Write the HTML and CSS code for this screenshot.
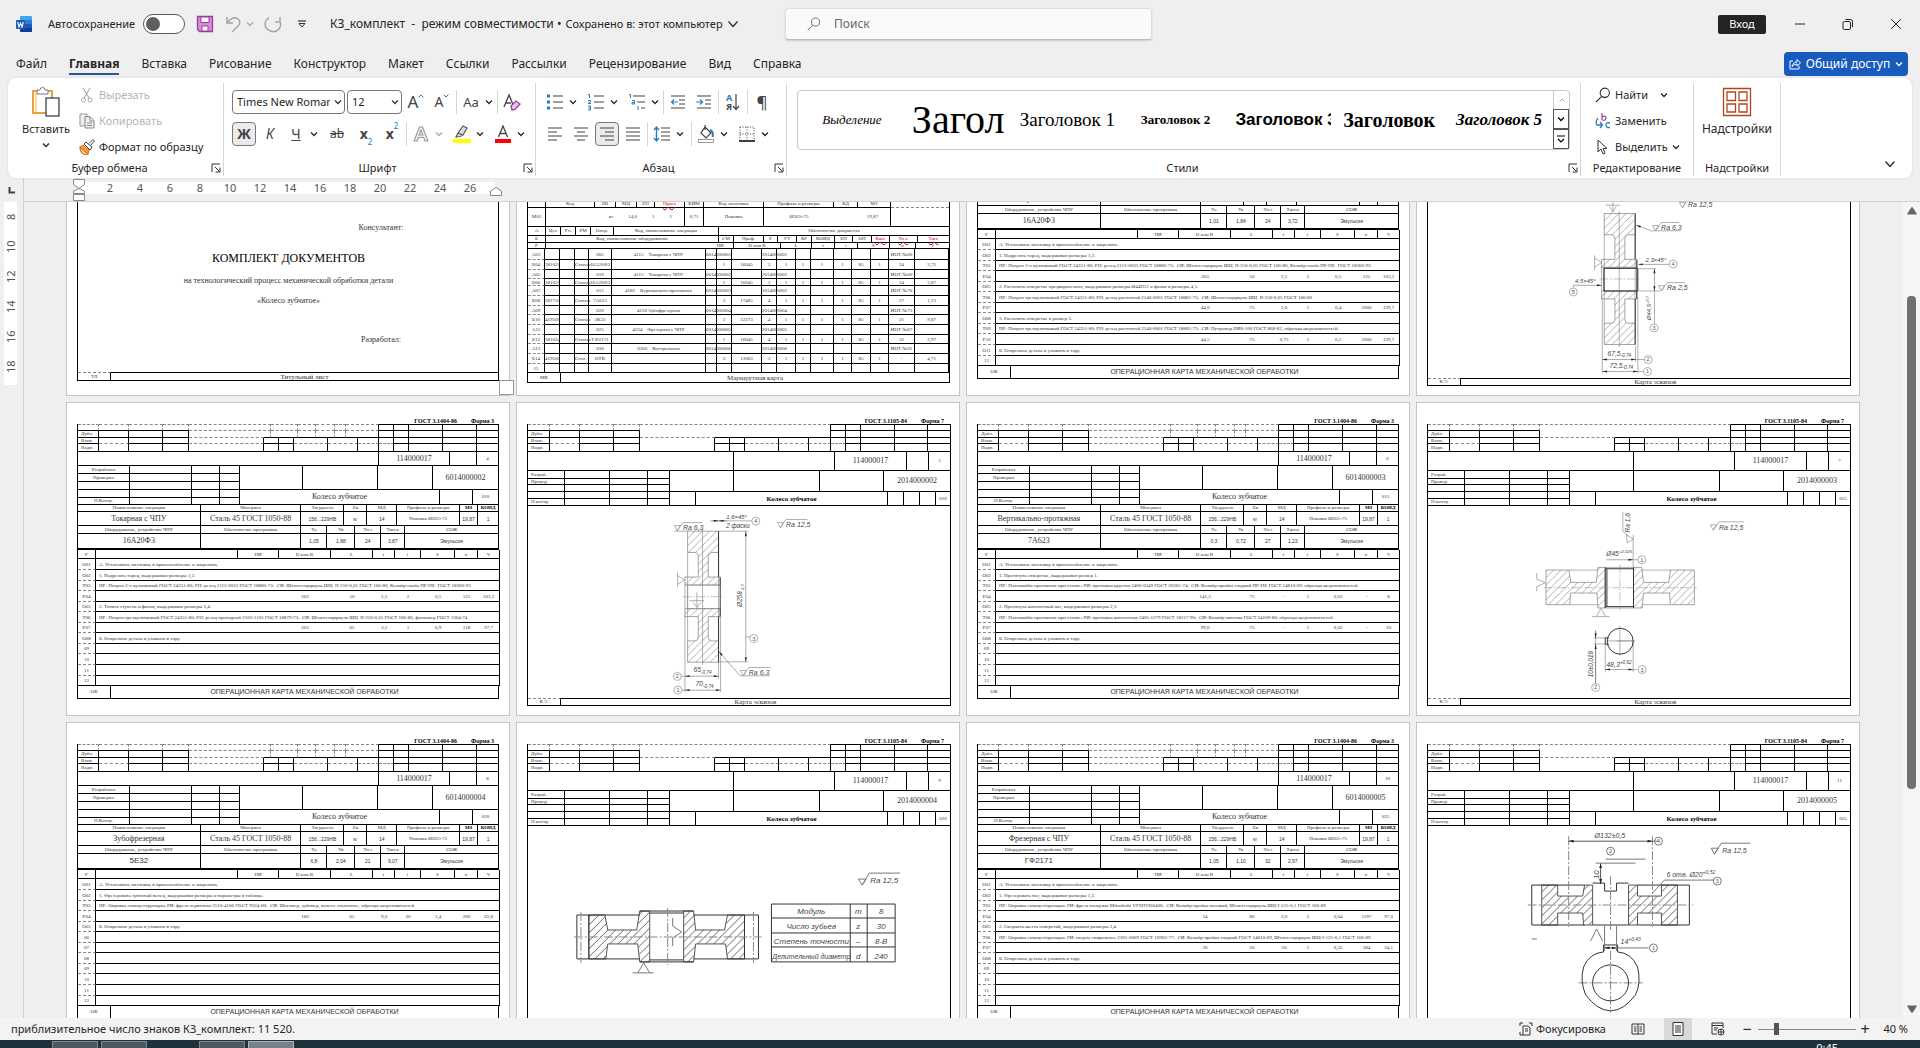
FILE: index.html
```html
<!DOCTYPE html>
<html lang="ru">
<head>
<meta charset="utf-8">
<title>КЗ_комплект</title>
<link rel="stylesheet" href="styles.css">
</head>
<body>
<svg class="defs" aria-hidden="true">
  <defs>
    <symbol id="chev" viewBox="0 0 8 8"><path d="M1 2.500 4 5.500 7 2.500" fill="none" stroke="currentColor" stroke-width="1.300"/></symbol>
    <symbol id="chev-thin" viewBox="0 0 12 12"><path d="M1.500 3.500 6 8.500l4.500-5" fill="none" stroke="currentColor" stroke-width="1.200"/></symbol>
    <symbol id="launch" viewBox="0 0 10 10"><path d="M1 9V1h8M4 4l4.500 4.500M9 4.500V9H4.500" fill="none" stroke="currentColor"/></symbol>
    <symbol id="find" viewBox="0 0 18 18"><circle cx="11" cy="6.500" r="5.200" fill="none" stroke="currentColor" stroke-width="1.200"/><path d="M7.500 10.500 1 17" stroke="currentColor" stroke-width="1.200"/></symbol>
    <pattern id="hatch" width="22" height="22" patternUnits="userSpaceOnUse"><path d="M0 22 22 0M-3 3 3-3M19 25 25 19" stroke="#888" stroke-width="2"/></pattern>
    <pattern id="hatch-fine" width="8" height="8" patternUnits="userSpaceOnUse"><path d="M0 8 8 0M-1 1 1-1M7 9 9 7" stroke="#666" stroke-width="1"/></pattern>
    <marker id="arrow" viewBox="0 0 14 8" refX="14" refY="4" markerWidth="18" markerHeight="8" markerUnits="userSpaceOnUse" orient="auto-start-reverse"><path d="M0 1 14 4 0 7z" fill="#222"/></marker>
    <marker id="arrow-s" viewBox="0 0 14 8" refX="14" refY="4" markerWidth="5" markerHeight="3" markerUnits="userSpaceOnUse" orient="auto-start-reverse"><path d="M0 0 14 4 0 8z" fill="#222"/></marker>
  </defs>
</svg>

<header class="titlebar">
  <div class="quick">
    <svg class="i16" viewBox="0 0 16 16"><rect x="4" width="12" height="16" rx="1" fill="#41a5ee"/><path d="M4 4h12v4H4z" fill="#2b7cd3"/><path d="M4 8h12v4H4z" fill="#185abd"/><path d="M4 12h12v3q0 1-1 1H5q-1 0-1-1z" fill="#103f91"/><rect y="4" width="9" height="9" rx="1" fill="#185abd"/><path d="M1.700 6 3 11l1.500-4L6 11l1.300-5" fill="none" stroke="#fff" stroke-width="1.100"/></svg>
    <label class="autosave" for="autosave">Автосохранение</label>
    <input class="toggle" type="checkbox" role="switch" id="autosave">
    <button class="q q-save" aria-label="Сохранить"><svg class="i18" viewBox="0 0 18 18"><path d="M1.500 1.500h15v15h-13l-2-2z" fill="#d78ad9" stroke="#9a3d9c" stroke-width="1.300"/><path d="M5 2h8v5.500H5zM6 16v-5h6v5z" fill="#fff" stroke="#9a3d9c"/></svg></button>
    <button class="q q-undo" aria-label="Отменить"><svg class="i18" viewBox="0 0 18 18"><path d="M2 2v6h6M2.500 7.500Q8 1 12.500 3.500 17 7 13 11L7 17" fill="none" stroke="#a3a3a3" stroke-width="1.400"/></svg></button>
    <button class="q q-more" aria-label="Список отмены"><svg class="i8 dim"><use href="#chev"/></svg></button>
    <button class="q q-redo" aria-label="Повторить"><svg class="i18" viewBox="0 0 18 18"><path d="M11 7h5V2M15.500 6Q18 10 15 14q-3.500 4-8.500 2Q1 14 1 9q.5-4 4-6.500" fill="none" stroke="#a3a3a3" stroke-width="1.400"/></svg></button>
    <button class="q q-custom" aria-label="Настройка панели"><svg class="i8" viewBox="0 0 8 8"><path d="M0 1h8" stroke="#333" stroke-width="1.200"/><path d="M1 3.500h6L4 7z" fill="none" stroke="#333"/></svg></button>
    <button class="doc-title">КЗ_комплект &nbsp;-&nbsp; режим совместимости • <small>Сохранено в: этот компьютер</small><svg class="i12"><use href="#chev-thin"/></svg></button>
  </div>
  <label class="search"><svg class="i14"><use href="#find"/></svg><input type="search" placeholder="Поиск" aria-label="Поиск"></label>
  <div class="window">
    <button class="login">Вход</button>
    <button class="wb" aria-label="Свернуть"><svg class="i12" viewBox="0 0 12 12"><path d="M1 6h10" stroke="#222"/></svg></button>
    <button class="wb" aria-label="Восстановить"><svg class="i12" viewBox="0 0 12 12"><rect x="1" y="3.500" width="7.500" height="8" rx="1.500" fill="none" stroke="#222"/><path d="M3.500 1.500h5q2 0 2 2V9" fill="none" stroke="#222"/></svg></button>
    <button class="wb" aria-label="Закрыть"><svg class="i12" viewBox="0 0 12 12"><path d="M1 1l10 10M11 1 1 11" stroke="#222"/></svg></button>
  </div>
</header>

<nav class="tabs">
  <a href="#file">Файл</a><a class="on" href="#home">Главная</a><a href="#insert">Вставка</a><a href="#draw">Рисование</a><a href="#design">Конструктор</a><a href="#layout">Макет</a><a href="#refs">Ссылки</a><a href="#mail">Рассылки</a><a href="#review">Рецензирование</a><a href="#view">Вид</a><a href="#help">Справка</a>
  <button class="share"><svg class="i12" viewBox="0 0 12 12"><path d="M4 3H1v8h9V8M3 8.500Q4 4 8 4V1.500L11.500 5 8 8V6Q5 6 3 8.500z" fill="none" stroke="#fff"/></svg>Общий доступ <svg class="i8"><use href="#chev"/></svg></button>
</nav>

<section class="ribbon">
  <div class="group g-clip">
    <div class="clip">
      <button class="paste"><svg class="i30" viewBox="0 0 30 30"><path d="M2 4h19v22H2z" fill="#fff" stroke="#eba13c" stroke-width="2"/><path d="M4 6h2v19H4z" fill="#fbdc9f"/><path d="M6 7V3h3q0-2.500 2.500-2.500T14 3h3v4z" fill="#fff" stroke="#777"/><rect x="15" y="11" width="13" height="18" fill="#fff" stroke="#333" stroke-width="1.200"/></svg><span>Вставить</span><svg class="i8"><use href="#chev"/></svg></button>
      <div class="lines">
        <button disabled><svg class="i16" viewBox="0 0 16 16"><path d="M4 1l6 10M11 1 5 11" stroke="#aaa" stroke-width="1.200"/><circle cx="4.500" cy="13" r="2" fill="none" stroke="#aaa"/><circle cx="11" cy="13" r="2" fill="none" stroke="#aaa"/></svg>Вырезать</button>
        <button disabled><svg class="i16" viewBox="0 0 16 16"><path d="M6 13H1V1h7v2" fill="#eee" stroke="#999"/><path d="M6 3.500h5l4 4V15H6zM11 4v4h4M8 10h5M8 12.500h5" fill="#eee" stroke="#888"/></svg>Копировать</button>
        <button><svg class="i16" viewBox="0 0 16 16"><path d="M1 8 9 15 6 16Q1 14 1 8z" fill="#fbdc9f" stroke="#d9711a" stroke-width="1.200"/><path d="M1 8l3-2 6 5-1 4z" fill="#f0a04a" stroke="#d9711a"/><path d="M5 5l2-2 6 5-2 3zM10 4.500 14 .5l1.500 1.500-4 4.500" fill="#fff" stroke="#444"/></svg>Формат по образцу</button>
      </div>
    </div>
    <footer><span>Буфер обмена</span><svg class="i10"><use href="#launch"/></svg></footer>
  </div>

  <div class="group g-font">
    <div class="row">
      <select class="font-name" aria-label="Шрифт"><option>Times New Roman</option></select>
      <select class="font-size" aria-label="Размер"><option>12</option></select>
      <button class="ib big" aria-label="Увеличить размер">A<svg class="i6 blue" viewBox="0 0 6 6"><path d="M.5 4.500 3 2l2.500 2.500" fill="none" stroke="currentColor"/></svg></button>
      <button class="ib mid" aria-label="Уменьшить размер">A<svg class="i6 blue" viewBox="0 0 6 6"><path d="M.5 1.500 3 4l2.500-2.500" fill="none" stroke="currentColor"/></svg></button>
      <i class="sep"></i>
      <button class="ib case">Aa</button><button class="cv" aria-label="Регистр"><svg class="i8"><use href="#chev"/></svg></button>
      <i class="sep"></i>
      <button class="ib" aria-label="Очистить"><svg class="i18" viewBox="0 0 18 18"><path d="M1 14 6 2l5 12M3 10h5" fill="none" stroke="#444" stroke-width="1.300"/><path d="M8 13l5-5 4 3-5 5.500-3 .500z" fill="#e9c3ea" stroke="#9a3d9c" stroke-width="1.300"/></svg></button>
    </div>
    <div class="row">
      <button class="ib on"><b>Ж</b></button>
      <button class="ib"><em>К</em></button>
      <button class="ib"><u>Ч</u></button><button class="cv" aria-label="Подчёркивание"><svg class="i8"><use href="#chev"/></svg></button>
      <button class="ib gap"><s>ab</s></button>
      <button class="ib gap"><b>x</b><sub>2</sub></button>
      <button class="ib"><b>x</b><sup>2</sup></button>
      <i class="sep"></i>
      <button class="ib" aria-label="Эффекты"><svg class="i18" viewBox="0 0 18 18"><path d="M2 16 7.500 2h3L16 16h-3l-1.300-3.500H6.300L5 16zM7.200 10h3.600L9 5z" fill="#eee" stroke="#999" stroke-width="1.100"/></svg></button><button class="cv dim" aria-label="Эффекты"><svg class="i8"><use href="#chev"/></svg></button>
      <button class="ib gap" aria-label="Выделение цветом"><svg class="i18" viewBox="0 0 18 18"><path d="M5 8l5-7 4 2-4 7zM5 8l-2 4 4-.500 3-1.500" fill="#ddd" stroke="#555" stroke-width="1.200"/><path d="M0 14h18v4H0z" fill="#ffff00"/></svg></button><button class="cv" aria-label="Цвет выделения"><svg class="i8"><use href="#chev"/></svg></button>
      <button class="ib gap" aria-label="Цвет текста"><svg class="i18" viewBox="0 0 18 18"><path d="M4.500 12 9 1l4.500 11M6 8.500h6" fill="none" stroke="#444" stroke-width="1.300"/><path d="M1 14h16v4H1z" fill="#ff0000"/></svg></button><button class="cv" aria-label="Цвета текста"><svg class="i8"><use href="#chev"/></svg></button>
    </div>
    <footer><span>Шрифт</span><svg class="i10"><use href="#launch"/></svg></footer>
  </div>

  <div class="group g-para">
    <div class="row">
      <button class="ib" aria-label="Маркеры"><svg class="i18" viewBox="0 0 18 18"><path d="M7 3h10M7 9h10M7 15h10" stroke="#444" stroke-width="1.200"/><path d="M1 1.500h3v3H1zM1 7.500h3v3H1zM1 13.500h3v3H1z" fill="#2a7dbd"/></svg></button><button class="cv" aria-label="Маркеры"><svg class="i8"><use href="#chev"/></svg></button>
      <button class="ib gap" aria-label="Нумерация"><svg class="i18" viewBox="0 0 18 18"><path d="M7 3h10M7 9h10M7 15h10" stroke="#444" stroke-width="1.200"/><path d="M1 1.500h1.500V5M1 7.500h2.500v1.500L1 10.500h3M1 13h2.500v4H1M1.500 15h2" fill="none" stroke="#2a7dbd"/></svg></button><button class="cv" aria-label="Нумерация"><svg class="i8"><use href="#chev"/></svg></button>
      <button class="ib gap" aria-label="Многоуровневый список"><svg class="i18" viewBox="0 0 18 18"><path d="M5 3h12M9 9h8M13 15h4" stroke="#444" stroke-width="1.200"/><path d="M1 1.500h1.500V5M4 7.500h2.500v3.500H4V9.500h2.500M10 13v4" fill="none" stroke="#2a7dbd"/></svg></button><button class="cv" aria-label="Многоуровневый список"><svg class="i8"><use href="#chev"/></svg></button>
      <i class="sep"></i>
      <button class="ib" aria-label="Уменьшить отступ"><svg class="i16" viewBox="0 0 16 16"><path d="M1 2h14M9 6h6M9 10h6M1 14h14" stroke="#444" stroke-width="1.200"/><path d="M8 8H2M4 5.500 1.500 8 4 10.500" fill="none" stroke="#2a7dbd" stroke-width="1.200"/></svg></button>
      <button class="ib" aria-label="Увеличить отступ"><svg class="i16" viewBox="0 0 16 16"><path d="M1 2h14M9 6h6M9 10h6M1 14h14" stroke="#444" stroke-width="1.200"/><path d="M0 8h6M4 5.500 6.500 8 4 10.500" fill="none" stroke="#2a7dbd" stroke-width="1.200"/></svg></button>
      <i class="sep"></i>
      <button class="ib sort" aria-label="Сортировка"><span><b>А</b><b>Я</b></span><svg class="i-sort" viewBox="0 0 8 18"><path d="M4 1v15M1 13l3 3.500L7 13" fill="none" stroke="#444" stroke-width="1.200"/></svg></button>
      <i class="sep"></i>
      <button class="ib big">¶</button>
    </div>
    <div class="row">
      <button class="ib" aria-label="По левому краю"><svg class="i16" viewBox="0 0 16 16"><path d="M1 2h14M1 6h9M1 10h14M1 14h9" stroke="#444" stroke-width="1.200"/></svg></button>
      <button class="ib" aria-label="По центру"><svg class="i16" viewBox="0 0 16 16"><path d="M1 2h14M4 6h8M1 10h14M4 14h8" stroke="#444" stroke-width="1.200"/></svg></button>
      <button class="ib on" aria-label="По правому краю"><svg class="i16" viewBox="0 0 16 16"><path d="M1 2h14M6 6h9M1 10h14M6 14h9" stroke="#444" stroke-width="1.200"/></svg></button>
      <button class="ib" aria-label="По ширине"><svg class="i16" viewBox="0 0 16 16"><path d="M1 2h14M1 6h14M1 10h14M1 14h14" stroke="#444" stroke-width="1.200"/></svg></button>
      <i class="sep"></i>
      <button class="ib" aria-label="Интервал"><svg class="i18" viewBox="0 0 18 18"><path d="M8 3h9M8 7h9M8 11h9M8 15h9" stroke="#444" stroke-width="1.200"/><path d="M3.500 2v14M1 5l2.500-3L6 5M1 13l2.500 3L6 13" fill="none" stroke="#2a7dbd" stroke-width="1.400"/></svg></button><button class="cv" aria-label="Интервал"><svg class="i8"><use href="#chev"/></svg></button>
      <i class="sep gap"></i>
      <button class="ib" aria-label="Заливка"><svg class="i18" viewBox="0 0 18 18"><path d="M8 2l6 6-5 5-5-5zM8 0v5" fill="#fff" stroke="#444" stroke-width="1.200"/><path d="M13 5q4 2 2.500 7" fill="none" stroke="#2a7dbd" stroke-width="2"/><rect x="1.500" y="14.500" width="15" height="3" fill="#fff" stroke="#999"/></svg></button><button class="cv" aria-label="Заливка"><svg class="i8"><use href="#chev"/></svg></button>
      <button class="ib gap" aria-label="Границы"><svg class="i16" viewBox="0 0 16 16"><path d="M1 1h14v13M1 1v13M8 1v13M1 8h14" fill="none" stroke="#444" stroke-dasharray="1 1.500"/><path d="M0 15h16" stroke="#000" stroke-width="1.500"/></svg></button><button class="cv" aria-label="Границы"><svg class="i8"><use href="#chev"/></svg></button>
    </div>
    <footer><span>Абзац</span><svg class="i10"><use href="#launch"/></svg></footer>
  </div>

  <div class="group g-style">
    <div class="gallery">
      <button class="st-em">Выделение</button>
      <button class="st-title">Загол</button>
      <button class="st-h1">Заголовок 1</button>
      <button class="st-h2">Заголовок 2</button>
      <button class="st-h3">Заголовок 3</button>
      <button class="st-h4">Заголовок</button>
      <button class="st-h5">Заголовок 5</button>
      <div class="spin">
        <button class="dim" aria-label="Вверх"><svg class="i8" viewBox="0 0 8 8"><path d="M1.500 5.500 4 3l2.500 2.500" fill="none" stroke="currentColor"/></svg></button>
        <button aria-label="Вниз"><svg class="i8"><use href="#chev"/></svg></button>
        <button aria-label="Все стили"><svg class="i8" viewBox="0 0 8 8"><path d="M0 1h8M1 4l3 3 3-3" fill="none" stroke="currentColor" stroke-width="1.200"/></svg></button>
      </div>
    </div>
    <footer><span>Стили</span><svg class="i10"><use href="#launch"/></svg></footer>
  </div>

  <div class="group g-edit">
    <div class="lines">
      <button><svg class="i16"><use href="#find"/></svg>Найти<svg class="i8 far"><use href="#chev"/></svg></button>
      <button><svg class="i16" viewBox="0 0 16 16"><path d="M7 0v7M7 4q4-2 4 1t-4 2" fill="none" stroke="#9a3d9c" stroke-width="1.200"/><path d="M15 10q-4-1-4 2t4 2.500M3 5Q0 9 2 12h5M5 9l2.500 3L5 15" fill="none" stroke="#2a7dbd" stroke-width="1.300"/></svg>Заменить</button>
      <button><svg class="i16" viewBox="0 0 16 16"><path d="M3 1v12l3-3 2 5 2-1-2-4.500h4z" fill="#fff" stroke="#333"/></svg>Выделить <svg class="i8"><use href="#chev"/></svg></button>
    </div>
    <footer><span>Редактирование</span></footer>
  </div>

  <div class="group g-add">
    <button class="paste"><svg class="i30" viewBox="0 0 30 30"><path d="M1.500 1.500h27v27h-27zM5 5h8.500v8.500H5zM17 5h8v8.500h-8zM5 17h8.500v8H5zM17 17h8v8h-8z" fill="none" stroke="#b0461f" stroke-width="1.300"/></svg><span>Надстройки</span></button>
    <footer><span>Надстройки</span></footer>
  </div>
  <button class="collapse" aria-label="Свернуть ленту"><svg class="i12"><use href="#chev-thin"/></svg></button>
</section>

<main class="work">
  <div class="corner"><svg class="i8" viewBox="0 0 8 8"><path d="M1.500 1v5.500H7" fill="none" stroke="#444" stroke-width="2"/></svg></div>
  <div class="hruler"><div class="hscale" id="hscale"></div></div>
  <div class="vruler"><div class="vscale" id="vscale"></div></div>
  <div class="canvas" id="canvas" tabindex="0"></div>
  <div class="scroll"><svg viewBox="0 0 10 8"><path d="M5 0q1 0 5 7.500H0Q4 0 5 0z" fill="#666"/></svg><div class="track"><i></i></div><svg viewBox="0 0 10 8"><path d="M5 8Q4 8 0 .5h10Q6 8 5 8z" fill="#666"/></svg></div>
</main>

<footer class="status">
  <span>приблизительное число знаков КЗ_комплект: 11 520.</span>
  <div class="modes">
    <button class="focus"><svg class="i14" viewBox="0 0 14 14"><path d="M1 4V1h3M10 1h3v3M4 13H1v-3M4 4h5l2 2v7H4zM6 7h3M6 9h3" fill="none" stroke="#333"/></svg>Фокусировка</button>
    <button class="mode" aria-label="Режим чтения"><svg class="i14" viewBox="0 0 14 14"><path d="M7 2v10M1 2h12v10H1zM3 5h2.500M3 7h2.500M3 9h2.500M8.500 5H11M8.500 7H11M8.500 9H11" fill="none" stroke="#333"/></svg></button>
    <button class="mode on" aria-label="Разметка страницы"><svg class="i14" viewBox="0 0 14 14"><path d="M2 .5h10v13H2zM4 4h6M4 6h6M4 8h6M4 10h6" fill="#fff" stroke="#333"/></svg></button>
    <button class="mode" aria-label="Веб-документ"><svg class="i14" viewBox="0 0 14 14"><path d="M6 12H1V1h11v5M1 3.500h11M3 6h4M3 8h3" fill="none" stroke="#333"/><circle cx="10" cy="10" r="3" fill="#fff" stroke="#333"/><path d="M7 10h6M10 7v6" stroke="#333"/></svg></button>
    <button class="zb" aria-label="Уменьшить">−</button>
    <input class="zoom" type="range" min="10" max="190" value="40" aria-label="Масштаб">
    <button class="zb" aria-label="Увеличить">+</button>
    <button class="pct">40 %</button>
  </div>
</footer>
<div class="taskbar"><i></i><i></i><i class="skip"></i><i class="act"></i><span>0:45</span></div>
<script src="app.js"></script>
</body>
</html>
```
FILE: styles.css
```css
* { box-sizing: border-box; }
body { margin: 0; height: 100vh; display: flex; flex-direction: column; overflow: hidden; background: #efefef; color: #262626; font: 12px/16px "Noto Sans", "Open Sans", sans-serif; }
button, select, input { font: inherit; color: inherit; margin: 0; }
button { border: 0; padding: 0; background: none; display: flex; align-items: center; justify-content: center; white-space: nowrap; }
a { color: inherit; text-decoration: none; }
svg { display: block; flex: none; }
.defs { position: absolute; width: 0; height: 0; }
.i6 { width: 6px; height: 6px; }
.i8 { width: 8px; height: 8px; }
.i10 { width: 10px; height: 10px; }
.i12 { width: 12px; height: 12px; }
.i14 { width: 14px; height: 18px; }
.i16 { width: 16px; height: 16px; }
.i18 { width: 18px; height: 18px; }
.i30 { width: 30px; height: 30px; }
.dim { color: #aaa; }
.blue { color: #2a7dbd; }

/* title bar */
.titlebar { flex: none; height: 48px; display: flex; align-items: center; padding-left: 16px; }
.quick { flex: none; width: 769px; display: flex; align-items: center; }
.autosave { margin-left: 16px; width: 88px; white-space: nowrap; font-size: 11px; }
.toggle { appearance: none; width: 42px; height: 20px; margin-left: 7px; border: 1px solid #555; border-radius: 10px; background: #fff; padding: 2px; }
.toggle::before { content: ""; display: block; width: 14px; height: 14px; border-radius: 7px; background: #5f5f5f; }
.q-save { margin-left: 11px; }
.q-undo { margin-left: 11px; }
.q-more { margin-left: 3px; }
.q-redo { margin-left: 10px; }
.q-custom { margin-left: 16px; }
.doc-title { margin-left: 24px; gap: 4px; }
.doc-title small { font-size: 11px; }
.search { flex: none; width: 367px; height: 32px; display: flex; align-items: center; gap: 11px; padding: 0 21px; background: #fafafa; border: 1px solid #ddd; border-bottom-color: #bbb; border-radius: 3px; box-shadow: 0 1px 2px #ccc; color: #666; }
.search input { flex: 1; border: 0; background: none; outline: 0; }
.search input::placeholder { color: #666; opacity: 1; }
.window { margin-left: auto; display: flex; align-items: center; }
.login { width: 48px; height: 19px; margin-right: 10px; background: #242424; color: #fff; border-radius: 2px; font-size: 11px; }
.wb { width: 48px; height: 32px; }

/* tabs */
.tabs { flex: none; height: 30px; display: flex; align-items: flex-start; gap: 22px; padding: 4px 12px 0 16px; }
.tabs a { height: 23px; line-height: 24px; }
.tabs .on { font-weight: 700; border-bottom: 2px solid #2b579a; }
.share { width: 124px; height: 24px; margin-left: auto; gap: 5px; background: #185abd; color: #fff; border-radius: 4px; }

/* ribbon */
.ribbon { flex: none; height: 100px; margin: 0 8px; display: flex; background: #fff; border-radius: 8px; box-shadow: 0 0 2px #ccc; padding: 5px 0 2px; font-size: 11px; }
.group { flex: none; display: flex; flex-direction: column; border-right: 1px solid #d5d5d5; }
.group footer { margin-top: auto; height: 16px; display: flex; align-items: center; }
.group footer span { flex: 1; text-align: center; }
.group footer .i10 { margin-right: 2px; color: #333; }
.g-clip { width: 216px; }
.g-font { width: 312px; padding-left: 8px; }
.g-para { width: 251px; padding-left: 7px; }
.g-style { width: 794px; padding-left: 10px; }
.g-edit { width: 113px; padding-left: 14px; }
.g-edit footer { margin-left: -14px; }
.g-add { width: 87px; font-size: 12px; }
.g-add footer { font-size: 11px; }
.clip { display: flex; }
.paste { width: 66px; margin-left: 5px; flex-direction: column; justify-content: flex-start; gap: 4px; padding-top: 4px; }
.g-add .paste { margin: 0; width: auto; }
.lines { display: flex; flex-direction: column; align-items: flex-start; margin-top: -1px; }
.lines button { height: 26px; gap: 4px; }
.lines button:disabled { color: #b5b5b5; }
.far { margin-left: 8px; }
.row { height: 32px; padding-top: 7px; display: flex; align-items: flex-start; gap: 2px; }
.row > * { flex: none; }
.font-name, .font-size { appearance: none; height: 24px; border: 1px solid #777; border-radius: 4px; padding: 0 14px 0 4px; background: #fff url("data:image/svg+xml,%3Csvg xmlns='http://www.w3.org/2000/svg' width='8' height='8'%3E%3Cpath d='M1 2.500 4 5.500 7 2.500' fill='none' stroke='%23333' stroke-width='1.300'/%3E%3C/svg%3E") no-repeat right 2px center; }
.font-name { width: 113px; }
.font-size { width: 55px; }
.ib { width: 24px; height: 24px; border-radius: 4px; font-size: 14px; color: #444; }
.ib.on { background: #ebebeb; border: 1px solid #777; }
.ib.big { font-size: 17px; }
.ib.mid { font-size: 14px; }
.ib .i6 { align-self: flex-start; margin-top: 3px; }
.case { font-size: 13px; }
.ib sub, .ib sup { font-size: 8px; line-height: 8px; color: #2a7dbd; }
.ib sub { align-self: flex-end; }
.ib sup { align-self: flex-start; }
.ib s { font-size: 12px; }
.cv { width: 12px; height: 24px; margin-left: -2px; }
.row .gap { margin-left: 3px; }
.sep { width: 1px; height: 24px; background: #d5d5d5; }
.sort span { display: flex; flex-direction: column; font-size: 9px; line-height: 9px; }
.sort b:first-child { color: #2a7dbd; }
.i-sort { width: 8px; height: 18px; }
.gallery { flex: none; height: 60px; margin: 7px 10px 0 0; display: flex; border: 1px solid #c8c8c8; border-radius: 4px; color: #000; font-family: "Liberation Serif", serif; }
.gallery > button { flex: 1 1 0; min-width: 0; margin: 0 6px; overflow: hidden; line-height: 40px; }
.gallery .st-em { font-size: 13px; font-style: italic; }
.gallery .st-title { font-size: 40px; justify-content: flex-start; }
.gallery .st-h1 { font-size: 19px; justify-content: flex-start; }
.gallery .st-h2 { font-size: 13px; font-weight: 700; }
.gallery .st-h3 { font: 700 17px/40px "Liberation Sans", sans-serif; justify-content: flex-start; }
.gallery .st-h4 { font-size: 20px; font-weight: 700; justify-content: flex-start; }
.gallery .st-h5 { font-size: 17px; font-weight: 700; font-style: italic; }
.spin { flex: none; width: 16px; display: flex; flex-direction: column; }
.spin button { flex: 1; border: 1px solid #555; }
.spin button.dim { border-color: #c8c8c8; border-width: 0 0 0 1px; }
.collapse { margin: auto 16px 6px auto; }

/* work area */
.work { flex: 1; min-height: 0; display: grid; grid-template: 24px minmax(0, 1fr) / 24px minmax(0, 1fr) 17px; color: #555; }
.corner { display: grid; place-items: center; border-right: 1px solid #d0d0d0; }
.hruler { grid-column: 2 / 4; border-bottom: 1px solid #d0d0d0; padding: 4px 0 0 55px; }
.hscale { width: 416px; height: 12px; background: #fff; position: relative; display: flex; padding-left: 16px; font-size: 11px; line-height: 12px; }
.hscale span { width: 30px; text-align: center; }
.hscale svg { position: absolute; width: 12px; }
.hscale .ind { left: -6px; top: -3px; height: 22px; }
.hscale .right { right: -7px; top: 5px; height: 9px; }
.vruler { border-right: 1px solid #d0d0d0; padding-left: 4px; }
.vscale { width: 13px; height: 183px; background: #fff; display: flex; flex-direction: column; font-size: 11px; line-height: 13px; }
.vscale span { height: 30px; writing-mode: vertical-rl; transform: rotate(180deg); text-align: center; }
.canvas { overflow: hidden; display: grid; grid-template-columns: repeat(auto-fill, 444px); grid-auto-rows: 314px; gap: 6px; padding-left: 42px; outline: 0; align-content: start; }
.scroll { background: #f5f5f5; display: flex; flex-direction: column; align-items: center; gap: 4px; padding: 5px 0; }
.scroll svg { width: 10px; height: 8px; }
.track { flex: 1; display: flex; flex-direction: column; }
.track i { flex: none; width: 9px; height: 63%; border-radius: 4px; background: #707070; margin-top: 77px; }

/* document pages */
.sheet { position: relative; background: #fff; border: 1px solid #c4c4c4; padding: 8px 10px 0; color: #333; font: 5px/6px "Liberation Serif", serif; white-space: nowrap; }
.sheet .code { height: 13px; padding: 7px 5px 0 0; display: flex; justify-content: flex-end; gap: 14px; font-size: 6px; font-weight: 700; color: #000; }
.form { width: 422px; border-left: 1px solid #000; color: #333; }
.form.wide { width: 424px; }
.form.route { width: 423px; border-right: 1px solid #000; }
.band { display: grid; }
.cell { display: flex; align-items: center; justify-content: center; border: 0 solid #000; border-width: 0 1px 1px 0; min-width: 0; min-height: 0; }
.l { justify-content: flex-start; padding-left: 3px; }
.e { justify-content: flex-end; padding-right: 12px; }
.dr { border-right: 1px dashed #888; }
.db { border-bottom: 1px dashed #888; }
.nr { border-right: 0; }
.nb { border-bottom: 0; }
.dt { border-top: 1px dashed #888; }
.st { border-top: 1px solid #000; }
.two { border-bottom-width: 2px; }
.m { font-size: 7px; }
.n { font-size: 8px; }
.a { font-family: "Liberation Sans", sans-serif; }
.k { font-weight: 700; color: #000; }
.split { display: flex; }
.form table { width: 100%; border-collapse: separate; border-spacing: 0; table-layout: fixed; font: inherit; }
.form th, .form td { padding: 0; font-weight: 400; text-align: center; height: inherit; border-bottom: 1px solid #000; overflow: visible; line-height: 5px; }
.form td:last-child, .form th:last-child { border-right: 1px solid #000; }
.form th { border-right: 1px solid #000; }
.ops td:first-child { border-right: 1px solid #000; border-bottom: 1px dashed #888; }
.ops tr:last-child td:first-child { border-bottom: 1px solid #000; }
.ops .txt { text-align: left; padding-left: 3px; }
.rt td { border-right: 1px solid #000; text-align: center; }
.rt td.o { text-align: left; }
.rt td.o span { display: block; width: 0; }
.red { color: #c00000; text-decoration: underline wavy #c00000; }
.title { height: 268px; border: solid #000; border-width: 1px 1px 0 0; padding: 118px 0 0 1px; text-align: center; font-size: 8px; line-height: 10px; }
.title p { margin: 0; }
.title .by { padding-left: 185px; }
.title h1 { margin: 15px 0 8px; font-size: 12px; line-height: 20px; font-weight: 400; color: #000; }
.title .obj { margin: 10px 0 29px; }
.draw { height: 192px; border-right: 1px solid #000; }
.draw svg { width: 423px; height: 192px; font-family: "Liberation Sans Narrow", "Liberation Sans", sans-serif; font-style: italic; overflow: visible; }
.th { fill: none; stroke: #888; stroke-width: 2; }
.bk { fill: none; stroke: #333; stroke-width: 3; }
.hx { fill: url(#hatch); stroke: #777; stroke-width: 2; }
.ax { fill: none; stroke: #888; stroke-width: 1.500; stroke-dasharray: 26 5 5 5; }
.dm { fill: none; stroke: #555; stroke-width: 1.500; marker-start: url(#arrow); marker-end: url(#arrow); }
.d1 { fill: none; stroke: #555; stroke-width: 1.500; marker-end: url(#arrow); }
.px .th, .px .hx { stroke-width: 1; }
.px .th { stroke: #777; }
.px .hx { fill: url(#hatch-fine); stroke: #555; }
.px .ax { stroke-width: 1; stroke-dasharray: 9 2 2 2; }
.px .bk { stroke-width: 1; stroke: #333; }
.px .dm { stroke-width: 1; marker-start: url(#arrow-s); marker-end: url(#arrow-s); }
.handle { position: absolute; right: -5px; bottom: 0; width: 15px; height: 15px; background: #fff; border: 1px solid #999; }

/* status bar and task bar */
.status { flex: none; height: 22px; display: flex; align-items: center; padding: 0 12px 0 11px; background: #f3f3f3; font-size: 11px; }
.modes { margin-left: auto; display: flex; align-items: center; }
.modes .i14 { height: 14px; }
.focus { gap: 3px; margin-right: 12px; }
.mode { width: 40px; height: 22px; }
.mode.on { background: #d9d9d9; width: 28px; margin: 0 6px; }
.zb { width: 14px; margin-left: 2px; font-size: 16px; }
.zoom { appearance: none; width: 98px; height: 14px; margin: 0 0 0 4px; background: linear-gradient(#888, #888) no-repeat center / 100% 1px; }
.zoom::-webkit-slider-thumb { appearance: none; width: 5px; height: 12px; background: #555; }
.pct { width: 36px; justify-content: flex-end; }
.taskbar { flex: none; height: 8px; overflow: hidden; display: flex; gap: 3px; padding: 1px 82px 0 52px; background: #1f323c; color: #fff; }
.taskbar i { width: 46px; background: #4a5a62; border: 1px solid #7c8990; border-bottom: 0; }
.taskbar .skip { margin-left: 49px; }
.taskbar .act { background: #75828a; border-color: #aab4ba; }
.taskbar span { margin-left: auto; font-size: 11px; line-height: 14px; }
```
FILE: app.js
```js
// A cell is "width|text|classes"; a band is one ruled line of a form.
const cell = s => {
  const [, t = "", c = ""] = String(s).split("|");
  return `<div class="cell ${c}">${t}</div>`;
};
const band = (h, cells) => {
  const cols = cells.map(s => parseInt(s, 10) + "fr").join(" ");
  return `<div class="band" style="height:${h}px;grid-template-columns:${cols}">${cells.map(cell).join("")}</div>`;
};
const block = (w, html) => `<div style="width:${w}px">${html}</div>`;

const stampA = () =>
  band(7, ["21||dr dt", "30||dr dt", "34||dr dt", "26||dr dt", "82||dr db dt", "27||dr db dt", "18||dr db dt", "19||dr db dt", "11||dr db dt", "33||db dt", "15||st", "15||st", "34||st", "34||st", "22||st"]) +
  band(7, ["21|Дубл.|l", 30, 34, 26, "75||nr db", "7||dr", "27||dr", "18||dr", "19||dr", "11||dr", 33, 15, 15, 34, 34, 22]) +
  band(6, ["21|Взам.|l", "30||db", 34, 26, "75||db", 15, 15, "34||db", "30||db", "21||db", "15||db", 15, 34, 34, 22]) +
  band(8, ["21|Подп.|l", 30, 34, 26, 75, 15, 15, 34, 30, 21, 15, 15, 34, 34, 22]);

const opRow = (no, body, h) => Array.isArray(body)
  ? `<tr style="height:${h}px"><td>${no}</td><td></td><td></td>${body.map(v => `<td>${v}</td>`).join("")}</tr>`
  : `<tr style="height:${h}px"><td>${no}</td><td class="txt" colspan="9">${body}</td></tr>`;
const opCols = [18, 142, 41, 52, 42, 22, 26, 34, 23, 22];
const opHeights = [11, 11, 10, 11, 10, 11, 10, 11, 10, 11, 11, 10];
const colgroup = a => `<colgroup>${a.map(w => `<col style="width:${w}px">`).join("")}</colgroup>`;

const formA = d => `<article class="sheet"><div class="code"><span>ГОСТ 3.1404-86</span><span>Форма 3</span></div><div class="form">` +
  stampA() +
  band(14, [301, "71|114000017|n", 27, "22|" + d.page]) +
  `<div class="split">` +
  block(162, band(8, ["52|Разработал", 62, 28, 20]) + band(8, ["52|Проверил", 62, 28, 20]) + band(8, [52, 62, 28, 20]) + band(8, [52, 62, 28, 20]) + band(7, ["52|Н.Контр.", 62, 28, 20])) +
  block(259, band(24, [63, 75, 55, `66|${d.doc}|n`]) + band(15, ["200|Колесо зубчатое|n", 33, "26|" + d.op])) +
  `</div>` +
  band(7, ["123|Наименование операции", "101|Материал", "43|Твердость", "23|Ев", "30|МД", "63|Профиль и размеры", "18|МЗ|k", "21|КОИД|k"]) +
  band(14, [`123|${d.name}|n`, "101|Сталь 45 ГОСТ 1050-88|n", "43|156...229НВ|a", "23|кг|a", "30|14|a", "63|Поковка Ø263×75", "18|19,87|a", "21|1|a"]) +
  band(8, ["123|Оборудование, устройство ЧПУ", "101|Обозначение программы", "26|То", "28|Тв", "26|Тп.з", "24|Тшт.к", "94|СОЖ"]) +
  band(16, [`123|${d.machine}|n two ${d.mc || ""}`, "101||two", `26|${d.t[0]}|a two`, `28|${d.t[1]}|a two`, `26|${d.t[2]}|a two`, `24|${d.t[3]}|a two`, "94|Эмульсия|a two"]) +
  `<table class="ops">${colgroup(opCols)}<tr style="height:9px">${["Р", "", "ПИ", "D или B", "L", "t", "i", "S", "n", "V"].map(t => `<th>${t}</th>`).join("")}</tr>` +
  opHeights.map((h, i) => { const r = d.rows[i] || [String(i + 1).padStart(2, "0"), ""]; return opRow(r[0], r[1], h); }).join("") +
  `</table>` +
  band(13, ["33|ОК", "388|ОПЕРАЦИОННАЯ КАРТА МЕХАНИЧЕСКОЙ ОБРАБОТКИ|a m"]) +
  `</div></article>`;

const formB = d => `<article class="sheet"><div class="code"><span>ГОСТ 3.1105-84</span><span>Форма 7</span></div><div class="form wide">` +
  band(7, ["22||dr dt", "30||dr dt", "34||dr dt", "26||dr dt", "191||dt nb", "15||st", "15||st", "34||st", "33||st", "23||st"]) +
  band(7, ["22|Дубл.|l", 30, 34, "26", "75||nr db", "116", 15, 15, 34, 33, 23]) +
  band(6, ["22|Взам.|l", "30||db", 34, 26, "75||nb", 15, 15, "34||db", "30||db", "22||db", "15||db", 15, 34, 33, 23]) +
  band(8, ["22|Подп.|l", 30, 34, 26, 75, 15, 15, 34, 30, 22, 15, 15, 34, 33, 23]) +
  band(19, [206, 101, "72|114000017|n", 22, "22|" + d.page]) +
  `<div class="split">` +
  block(142, band(8, ["37|Разраб.|l", 45, 38, 22]) + band(6, ["37|Провер.|l", 45, 38, 22]) + band(7, [37, 45, 38, 22]) + band(7, [37, 45, 38, 22]) + band(7, ["37|Н.контр.|l", 45, 38, 22])) +
  block(281, band(21, [64, 86, 64, `67|${d.doc}|n`]) + band(14, [26, "192|Колесо зубчатое|k m", 16, 16, 16, "15|" + d.op])) +
  `</div><div class="draw"><svg viewBox="${d.box}"${d.px ? ' class="px"' : ""}>${d.svg}</svg></div>` +
  band(8, ["33|К.Э.|dt", "390|Карта эскизов|st m"]) +
  `</div></article>`;

// drawing helpers
const tx = (x, y, t, s = 24, extra = "") => `<text x="${x}" y="${y}" font-size="${s}" fill="#444" ${extra}>${t}</text>`;
const ball = (x, y, n, r = 12) => `<circle class="th" cx="${x}" cy="${y}" r="${r}"/><text x="${x}" y="${y + r / 2}" font-size="${r * 1.4}" fill="#555" text-anchor="middle" font-style="normal">${n}</text>`;
const ra = (x, y, t, w = 80) => `<path class="th" d="M${x} ${y - 16}h18l-9 16zM${x + 9} ${y}l17-25h${w - 26}"/>` + tx(x + 26, y - 2, t, 21);
const wheel = (x, y) => `<g transform="translate(${x} ${y})">
  <path class="hx" d="M0 0H93V64H72Q62 66 62 76V138H98V162H-8V138H32V74Q32 66 22 64H0z"/>
  <path class="hx" d="M-8 233H98V257H62V318Q62 330 72 330H93V394H0V330H22Q32 330 32 320V257H-8z"/>
  <path class="th" d="M0 64V330M93 64V330M-8 162V233M45-8V402M0 162V233M-2 162H98M-2 233H98"/><path class="bk" d="M93 0V138M93 257V394M98 140V257"/><path class="ax" d="M-14 197H106"/></g>`;
const cross = `<path class="hx" d="M437 508H506L511 545H588L593 500H615V622H593L590 577H511L508 612H437zM700 500H725L730 545H806L811 508H883V612H811L808 577H730L726 622H700z"/>
  <path class="th" d="M506 508H592M726 508H811M508 612H593M726 612H811M615 500H700M615 622H700"/>`;

const op = (n, t) => [n, t];
const take = "Б. Открепить деталь и уложить в тару.";
const set = "А. Установить заготовку в приспособление и закрепить.";

const title = `<article class="sheet"><div class="code"></div><div class="form"><div class="title">
  <p class="by">Консультант:</p><h1>КОМПЛЕКТ ДОКУМЕНТОВ</h1><p>на технологический процесс механической обработки детали</p>
  <p class="obj">«Колесо зубчатое»</p><p class="by">Разработал:</p></div>` +
  band(9, ["33|ТЛ|dt", "388|Титульный лист|st m"]) + `</div><span class="handle"></span></article>`;

const rCols = [17, 15, 15, 14, 23, 94, 11, 15, 30, 15, 19, 15, 23, 18, 19, 18, 26, 34];
const ra_ = (n, o, t, a, b, i) => [n, "", "", "", o, t, "*" + a, "", "", "*" + b, "", "", "", "", "", "", i, ""];
const rb_ = (n, c, s, m, k, f, p, w, v) => [n, "*" + c, "", "*" + s, m, "", "", k, f, p, "1", "1", "1", "1", "85", "1", w, v];
const rRows = [
  ra_("А03", "005", "4115 &ensp; Токарная с ЧПУ", "6014000001", "2014000001", "ИОТ №60"),
  rb_("Б04", "381021", "Станок", "16А20Ф3", "1", "16045", "3", "24", "3,72"),
  ra_("А05", "010", "4115 &ensp; Токарная с ЧПУ", "6014000002", "2014000002", "ИОТ №60"),
  rb_("Б06", "381021", "Станок", "16А20Ф3", "1", "16045", "3", "24", "3,87"),
  ra_("А07", "015", "4182 &ensp; Вертикально-протяжная", "6014000003", "2014000003", "ИОТ №70"),
  rb_("Б08", "381750", "Станок", "7А623", "3", "17485", "4", "27", "1,23"),
  ra_("А09", "020", "4150 Зубофрезерная", "6014000004", "2014000004", "ИОТ №73"),
  rb_("Б10", "419500", "Станок", "5К32", "2", "12273", "4", "21", "9,87"),
  ra_("А11", "025", "4234 &ensp; Фрезерная с ЧПУ", "6014000005", "2014000005", "ИОТ №67"),
  rb_("Б12", "381024", "Станок", "ГФ2171", "1", "16045", "4", "32", "2,97"),
  ra_("А13", "030", "0260 &ensp; Контрольная", "6014000006", "2014000006", "ИОТ №91"),
  rb_("Б14", "419500", "Стол", "ОТК", "3", "13063", "3", "-", "4,71"),
  ["15", ...Array(17).fill("")]
];
const rH = [11, 10, 9, 7, 10, 10, 9, 10, 10, 9, 10, 10, 9];
const route = `<article class="sheet"><div class="code"></div><div class="form route">` +
  band(97, ["422||nr nb"]) +
  band(7, [18, "49|Код", "21|БВ", "21|МД", "18|ЕН", "30|<span class='red'>Нрасх</span>", "19|КИМ", "60|Код заготовки", "70|Профиль и размеры", "24|КД", "33|МЗ", "58||nr db"]) +
  band(19, ["18|М02", "139|кг&emsp;&emsp;&emsp;14,0&emsp;&emsp;&emsp;1&emsp;&emsp;&emsp;1|e", "19|0,71", "60|Поковка", "70|Ø263×75|nr", "57|19,87|e", "58||nr"]) +
  band(9, ["18|А", "15|Цех", "15|Уч.", "15|РМ", "23|Опер.", "105|Код, наименование операции", "230|Обозначение документа|nr"]) +
  band(7, ["18|Б", "173|Код, наименование оборудования", "15|СМ", "30|Проф.", "14|Р", "19|УТ", "15|КР", "23|КОИД", "18|ЕН", "19|ОП", "18|<span class='red'>Кшт.</span>", "28|<span class='red'>Тп.з.</span>", "31|<span class='red'>Тшт.</span>|nr"]) +
  band(6, ["18|Р", "161||nr", "27|ПИ", "47|D или B", "31|L", "23|t", "23|i", "32|S", "26|n", "33|V|nr"]) +
  `<table class="ops rt">${colgroup(rCols)}` +
  rRows.map((r, i) => `<tr style="height:${rH[i]}px">${r.map(v => v[0] === "*" ? `<td class="o"><span>${v.slice(1)}</span></td>` : `<td>${v}</td>`).join("")}</tr>`).join("") +
  `</table>` + band(10, ["33|МК", "388|Маршрутная карта|m nr"]) + `</div></article>`;

const s3 = formA({ page: "2", doc: "6014000001", op: "005", name: "Токарная с ЧПУ", machine: "16А20Ф3", t: ["1,01", "1,84", "24", "3,72"], rows: [
  op("О01", set), op("О02", "1. Подрезать торец, выдерживая размеры 1,2."),
  op("Т03", "ПР: Патрон 3-х кулачковый ГОСТ 24351-80; РН: резец 2112-0033 ГОСТ 18880-73;&nbsp; СИ: Штангенциркуль ШЦ&nbsp; II-250-0,05 ГОСТ 166-80, Калибр-скоба ПР-НЕ&nbsp; ГОСТ 18360-93"),
  op("Р04", ["263", "50", "2,5", "2", "0,5", "125", "103,2"]),
  op("О05", "2. Расточить отверстие предварительно, выдерживая размеры Ø44Н12 и фаски в размеры 4,5."),
  op("Т06", "ПР: Патрон трехкулачковый ГОСТ 24351-80; РН: резец расточной 2140-0001 ГОСТ 18882-73;&nbsp; СИ: Штангенциркуль ШЦ&nbsp; II-250-0,05 ГОСТ 166-80"),
  op("Р07", ["44,0", "75", "2,0", "1", "0,4", "1000", "139,7"]),
  op("О08", "3. Расточить отверстие в размер 3."),
  op("Т09", "ПР: Патрон трехкулачковый ГОСТ 24351-80; РН: резец расточной 2140-0001 ГОСТ 18882-73;&nbsp; СИ: Нутромер НИ0-100 ГОСТ 868-82, образцы шероховатостей."),
  op("Р10", ["44,5", "75", "0,75", "2", "0,2", "1000", "139,7"]),
  op("О11", take)] });

const s4 = formB({ page: "3", doc: "2014000001", op: "005", box: "82 -15 1272 576", svg:
  wheel(612, 67) + ra(838, 50, "Ra 12,5", 100) + ra(757, 119, "Ra 6,3", 80) + ra(775, 300, "Ra 2,5", 80) +
  `<path class="th" d="M638 15V62M616 42h44M628 46l10 17 10-17M583 193V237M583 200l21 15-21 13M842 119H750M606 320V548M713 320V548M706 466V512M716 233H768M716 300H780M519 283V290"/>
  <path class="bk" d="M611 232H713V300H611z"/>
  <path class="d1" d="M750 117 708 102"/><path class="d1" d="M519 283H604"/><path class="d1" d="M806 220H714"/><path class="dm" d="M763 233V300"/><path class="th" d="M763 300V400"/>
  <path class="dm" d="M606 506H707"/><path class="dm" d="M606 542H713"/><path class="th" d="M707 506h26M713 542h18"/>` +
  ball(819, 219, 4) + ball(519, 303, 5) + ball(762, 411, 3) + ball(744, 506, 2) + ball(742, 542, 1) +
  tx(736, 213, "2,3×45°", 18) + tx(524, 275, "4,5×45°", 18) + tx(622, 496, "67,5<tspan font-size='14' dy='4'>-0,74</tspan>", 20) + tx(628, 532, "72,5<tspan font-size='14' dy='4'>-0,74</tspan>", 20) +
  tx(754, 388, "Ø44,5<tspan font-size='12' dy='-8'>+0,7</tspan>", 18, 'transform="rotate(-90 754 388)"') });

const s5 = formA({ page: "4", doc: "6014000002", op: "010", name: "Токарная с ЧПУ", machine: "16А20Ф3", t: ["1,05", "1,88", "24", "3,87"], rows: [
  op("О01", set), op("О02", "1. Подрезать торец, выдерживая размеры 1,2."),
  op("Т03", "ПР: Патрон 3-х кулачковый ГОСТ 24351-80; РН: резец 2112-0033 ГОСТ 18880-73;&nbsp; СИ: Штангенциркуль ШЦ&nbsp; II-250-0,05 ГОСТ 166-80, Калибр-скоба ПР-НЕ&nbsp; ГОСТ 18360-93"),
  op("Р04", ["263", "50", "2,5", "2", "0,5", "125", "103,2"]),
  op("О05", "2. Точить ступень и фаски, выдерживая размеры 3,4."),
  op("Т06", "ПР: Патрон трехкулачковый ГОСТ 24351-80; РН: резец проходной 2103-1105 ГОСТ 18879-73;&nbsp; СИ: Штангенциркуль ШЦ&nbsp; II-250-0,05 ГОСТ 166-80, фаскомер ГОСТ 1364-74"),
  op("Р07", ["263", "65", "3,5", "1", "0,9", "118", "97,7"]),
  op("О08", take)] });

const s6 = formB({ page: "5", doc: "2014000002", op: "010", box: "52 316 1272 576", svg:
  wheel(532, 391) + ra(492, 390, "Ra 6,3", 84) + ra(802, 381, "Ra 12,5", 90) + ra(690, 826, "Ra 6,3", 92) +
  `<path class="th" d="M492 391H533M625 391H714M625 784H714M502 515V560M502 525l21 13-21 12M524 645V874M631 645V874M625 784V834M560 575v45M538 600h44M548 605l12 16 12-16M690 826H780M707 709h14M605 360H725"/>
  <path class="d1" d="M600 360H625"/><path class="d1" d="M650 360H626"/><path class="dm" d="M707 392V784"/><path class="d1" d="M690 826 626 753"/>
  <path class="dm" d="M524 827H625"/><path class="dm" d="M524 869H631"/><path class="th" d="M512 827h14M515 869h10"/>` +
  ball(737, 361, 4) + ball(731, 714, 3) + ball(501, 828, 2) + ball(503, 869, 1) +
  tx(648, 353, "1,6×45°", 18) + tx(648, 381, "2 фаски", 19) + tx(550, 815, "65<tspan font-size='14' dy='5'>-0,74</tspan>", 20) + tx(556, 858, "70<tspan font-size='14' dy='5'>-0,74</tspan>", 20) +
  tx(695, 618, "Ø258<tspan font-size='12' dy='6'>-1,3</tspan>", 19, 'transform="rotate(-90 695 618)"') });

const s7 = formA({ page: "6", doc: "6014000003", op: "015", name: "Вертикально-протяжная", machine: "7А623", t: ["0,3", "0,72", "27", "1,23"], rows: [
  op("О01", set), op("О02", "1. Протянуть отверстие, выдерживая размер 1."),
  op("Т03", "ПР: Планшайба протяжная при станке; РИ: протяжка круглая 2400-0349 ГОСТ 20365-74;&nbsp; СИ: Калибр-пробка гладкий ПР-НЕ ГОСТ 14810-69; образцы шероховатостей"),
  op("Р04", ["141,3", "75", "-", "1", "0,03", "-", "8"]),
  op("О05", "2. Протянуть шпоночный паз, выдерживая размеры 2,3."),
  op("Т06", "ПР: Планшайба протяжная при станке; РИ: протяжка шпоночная 2405-1279 ГОСТ 18217-90;&nbsp; СИ: Калибр-шпонка ГОСТ 24109-80; образцы шероховатостей"),
  op("Р07", ["99,6", "75", "-", "1", "0,02", "-", "10"]),
  op("О08", take)] });

const s8 = formB({ page: "7", doc: "2014000003", op: "015", box: "82 316 1272 576", svg:
  cross + ra(931, 388, "Ra 12,5", 102) +
  `<path class="bk" d="M615 500V622M620 505V618M700 500V622M617 504H699M617 618H699"/><path class="ax" d="M430 561H890M659 492V628"/>
  <path class="th" d="M668 333V392L682 402M679 402l20 13-18 11zM699 402V500M409 517v18l26 11-26 12v14M589 647l13-24 14 24M576 648h52M586 690V850M580 712h36M580 730h36M615 730V815M699 722V815M700 477h12M700 807h12M650 721H705M659 676V765M620 721H700"/>
  <circle class="bk" cx="660" cy="722" r="39"/><path class="bk" d="M625 712H615V731H625" fill="#fff"/>
  <path class="d1" d="M618 477H699"/><path class="dm" d="M615 807H699"/><path class="d1" d="M586 690V712"/><path class="d1" d="M586 848V731"/>` +
  ball(725, 477, 1) + ball(586, 861, 2) + ball(726, 807, 3) +
  tx(618, 466, "Ø45<tspan font-size='13' dy='-9'>+0,025</tspan>", 20) + tx(618, 798, "48,3<tspan font-size='14' dy='-9'>+0,62</tspan>", 21) +
  tx(690, 395, "Ra 1,6", 20, 'transform="rotate(-90 690 395)"') + tx(577, 830, "10±0,018", 19, 'transform="rotate(-90 577 830)"') });

const s9 = formA({ page: "8", doc: "6014000004", op: "020", name: "Зубофрезерная", machine: "5Е32", mc: "a", t: ["6,8", "2,04", "21", "9,07"], rows: [
  op("О01", set), op("О02", "1. Фрезеровать зубчатый венец, выдерживая размеры и параметры в таблице."),
  op("Т03", "ПР: Оправка самоцентрующая; РИ: фреза червячная 2510-4106 ГОСТ 9324-80;&nbsp; СИ: Шагомер, зубомер, колесо эталонное; образцы шероховатостей"),
  op("Р04", ["180", "65", "9,0", "30", "2,4", "200", "62,8"]),
  op("О05", take)] });

const rows10 = [["Модуль", "m", "8"], ["Число зубьев", "z", "30"], ["Степень точности", "–", "8-В"], ["Делительный диаметр", "d", "240"]];
const s10 = formB({ page: "9", doc: "2014000004", op: "020", px: 1, box: "527 825 424 192", svg:
  `<path class="hx" d="M588 914H604L607 929H636L639 910H649V961H639L637 943H607L605 958H588zM683 910H693L695 929H724L727 914H744V958H727L725 943H695L693 961H683z"/>
  <path class="bk" d="M576 914H639M576 958H639M693 914H758M693 958H758M576 914V958M758 914V958M588 914V958M744 914V958M639 910H693M639 961H693M649 912H683M649 959H683"/>
  <path class="ax" d="M573 936H761M667 907V964M580 911V962M753 911V962"/>
  <path class="th" d="M672 917v8l9 6-9 6v8M637 972l6-10 6 10M632 972h21M858 878h8l-4 6zM862 884l7-12h31"/>` + tx(870, 882, "Ra 12,5", 8) +
  `<path class="bk" d="M771 903H895V961H771zM850 903V961M867 903V961M771 917H895M771 932H895M771 946H895"/>` +
  rows10.map((r, i) => tx(811, 913 + i * 15, r[0], i > 2 ? 7 : 8, 'text-anchor="middle"') + tx(858, 913 + i * 15, r[1], 8, 'text-anchor="middle"') + tx(881, 913 + i * 15, r[2], 8, 'text-anchor="middle"')).join("") });

const s11 = formA({ page: "10", doc: "6014000005", op: "025", name: "Фрезерная с ЧПУ", machine: "ГФ2171", mc: "a", t: ["1,05", "1,10", "32", "2,97"], rows: [
  op("О01", set), op("О02", "1. Фрезеровать паз, выдерживая размеры 1,2."),
  op("Т03", "ПР: Оправка самоцентрующая; РИ: фреза концевая Mitsubishi VFSHVD0406;&nbsp; СИ: Калибр-пробка пазовый, Штангенциркуль ШЦ-I-125-0,1 ГОСТ 166-89"),
  op("Р04", ["34", "80", "3,0", "2", "0,04", "1597", "97,0"]),
  op("О05", "2. Сверлить шесть отверстий, выдерживая размеры 3,4."),
  op("Т06", "ПР: Оправка самоцентрующая; РИ: сверло спиральное 2301-0069 ГОСТ 10903-77;&nbsp; СИ: Калибр-пробка гладкий ГОСТ 14810-69, Штангенциркуль ШЦ-I-125-0,1 ГОСТ 166-89"),
  op("Р07", ["20", "20", "10", "1", "0,35", "384", "24,1"]),
  op("О08", take)] });

const s12 = formB({ page: "11", doc: "2014000005", op: "025", px: 1, box: "1427 825 424 192", svg:
  `<path class="hx" d="M1541 884H1557V895H1582L1584 884H1592V924H1583L1582 912H1557V924H1541zM1628 884H1637V895H1661V884H1677V924H1661V912H1637V924H1628z"/>
  <path class="bk" d="M1531 884H1584M1531 924H1584M1637 884H1689M1637 924H1689M1531 884V924M1689 884V924M1592 882H1604V890H1616V882H1628M1592 924H1628"/>
  <path class="ax" d="M1527 904H1693M1610 875V930M1568 835V926M1652 835V926M1610 950V1012M1578 982H1642"/>
  <circle class="bk" cx="1610" cy="982" r="18"/><path class="bk" d="M1583 966q6-14 20-15v-7h14v7q14 1 20 15 4 16-2 28-12 16-25 16t-25-16q-6-14-2-28z"/>
  <path class="dm" d="M1568 840H1652"/><path class="dm" d="M1604 947H1616"/><path class="dm" d="M1600 862V883"/><path class="th" d="M1616 947h32M1604 925v25M1616 925v25M1652 892l12-13h50M1595 862h40M1605 858h40M1652 840h6M1590 940l6-12 6 12M1536 938l-5 0"/>` +
  ball(1658, 840, 4, 4) + ball(1717, 880, 3, 4) + ball(1610, 850, 2, 4) + ball(1653, 947, 1, 4) +
  tx(1594, 837, "Ø132±0,5", 7) + tx(1666, 876, "6 отв. Ø20<tspan font-size='5' dy='-3'>+0,52</tspan>", 7) + tx(1620, 943, "14<tspan font-size='5' dy='-3'>+0,43</tspan>", 7) +
  tx(1598, 878, "10", 8, 'transform="rotate(-90 1598 878)"') + `<path class="th" d="M1711 847h7l-4 6zM1714 853l7-11h29"/>` + tx(1722, 852, "Ra 12,5", 7) });

const canvas = document.getElementById("canvas");
canvas.innerHTML = title + route + s3 + s4 + s5 + s6 + s7 + s8 + s9 + s10 + s11 + s12;
canvas.scrollTop = 120;

const span = n => `<span>${n}</span>`;
document.getElementById("hscale").innerHTML = Array.from({ length: 13 }, (_, i) => span(2 + i * 2)).join("") +
  `<svg class="ind" viewBox="0 0 12 22"><path d="M.5.5h11v5L6 9.500.500 5.500zM.500 14.500V12L6 9.500 11.500 12v2.500zM.500 15.500h11v6H.500z" fill="#fff" stroke="#888"/></svg>` +
  `<svg class="right" viewBox="0 0 12 9"><path d="M.5 8.500V4L6 .5 11.500 4v4.500z" fill="#fff" stroke="#888"/></svg>`;
document.getElementById("vscale").innerHTML = [8, 10, 12, 14, 16, 18].map(span).join("");
```
